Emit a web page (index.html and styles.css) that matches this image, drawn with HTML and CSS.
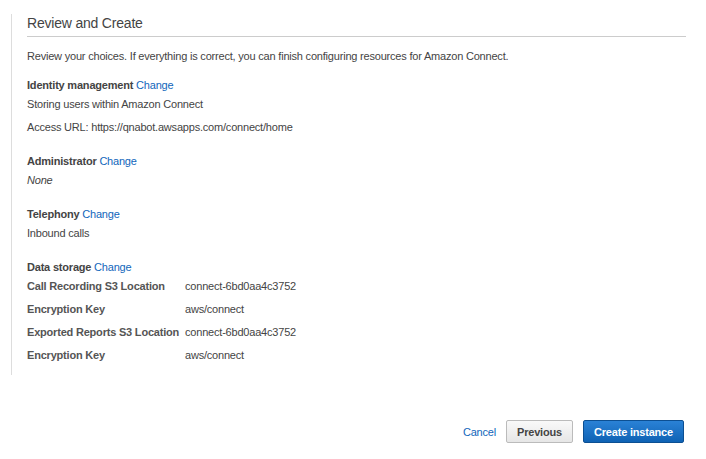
FILE: index.html
```html
<!DOCTYPE html>
<html>
<head>
<meta charset="utf-8">
<link rel="stylesheet" href="styles.css">
</head>
<body>
<div class="panel">
  <h2 class="heading">Review and Create</h2>
  <p class="intro">Review your choices. If everything is correct, you can finish configuring resources for Amazon Connect.</p>

  <div class="section">
    <div class="title">Identity management <a class="link">Change</a></div>
    <p>Storing users within Amazon Connect</p>
    <p>Access URL: https://qnabot.awsapps.com/connect/home</p>
  </div>

  <div class="section">
    <div class="title">Administrator <a class="link">Change</a></div>
    <p class="italic">None</p>
  </div>

  <div class="section">
    <div class="title">Telephony <a class="link">Change</a></div>
    <p>Inbound calls</p>
  </div>

  <div class="section last">
    <div class="title">Data storage <a class="link">Change</a></div>
    <div class="grid">
      <span class="key">Call Recording S3 Location</span><span>connect-6bd0aa4c3752</span>
      <span class="key">Encryption Key</span><span>aws/connect</span>
      <span class="key">Exported Reports S3 Location</span><span>connect-6bd0aa4c3752</span>
      <span class="key">Encryption Key</span><span>aws/connect</span>
    </div>
  </div>
</div>

<div class="actions">
  <a class="cancel">Cancel</a>
  <button class="btn btn-secondary">Previous</button>
  <button class="btn btn-primary">Create instance</button>
</div>
</body>
</html>
```

FILE: styles.css
```css
html, body {
  margin: 0;
  padding: 0;
  background: #fff;
}
body {
  font-family: Arial, "Liberation Sans", sans-serif;
  font-size: 11px;
  letter-spacing: -0.2px;
  color: #444;
}
.panel {
  margin: 14px 20px 0 11px;
  border-left: 1px solid #ddd;
  padding: 0 0 13px 15px;
}
.heading {
  margin: 0;
  font-size: 14px;
  letter-spacing: -0.2px;
  font-weight: normal;
  line-height: 18px;
  color: #444;
  padding-bottom: 4px;
  border-bottom: 1px solid #ccc;
}
.intro {
  margin: 12px 0 15px;
  line-height: 14px;
}
.section {
  margin-bottom: 20px;
}
.section.last {
  margin-bottom: 0;
}
.title {
  font-weight: bold;
  line-height: 14px;
  margin-bottom: 5px;
  color: #444;
}
.link {
  font-weight: normal;
  color: #1166bb;
  cursor: pointer;
}
.section p {
  margin: 0 0 9px;
  line-height: 14px;
}
.section p:last-child {
  margin-bottom: 0;
}
.italic {
  font-style: italic;
}
.grid {
  display: grid;
  grid-template-columns: 158px auto;
  row-gap: 9px;
  line-height: 14px;
}
.key {
  font-weight: bold;
  color: #555;
  white-space: nowrap;
}
.actions {
  display: flex;
  justify-content: flex-end;
  align-items: center;
  margin: 45px 22px 0 0;
  gap: 10px;
}
.cancel {
  color: #1166bb;
  cursor: pointer;
}
.btn {
  font-family: Arial, "Liberation Sans", sans-serif;
  font-size: 11px;
  letter-spacing: -0.2px;
  font-weight: bold;
  height: 23px;
  border-radius: 2px;
  padding: 0;
  box-sizing: border-box;
  white-space: nowrap;
  cursor: pointer;
}
.btn-secondary {
  width: 67px;
  color: #444;
  background: linear-gradient(#f9f9f9, #e6e6e6);
  border: 1px solid #bbb;
}
.btn-primary {
  width: 101px;
  color: #fff;
  background: linear-gradient(#2a82d6, #0f62b4);
  border: 1px solid #0c4f92;
}
```
